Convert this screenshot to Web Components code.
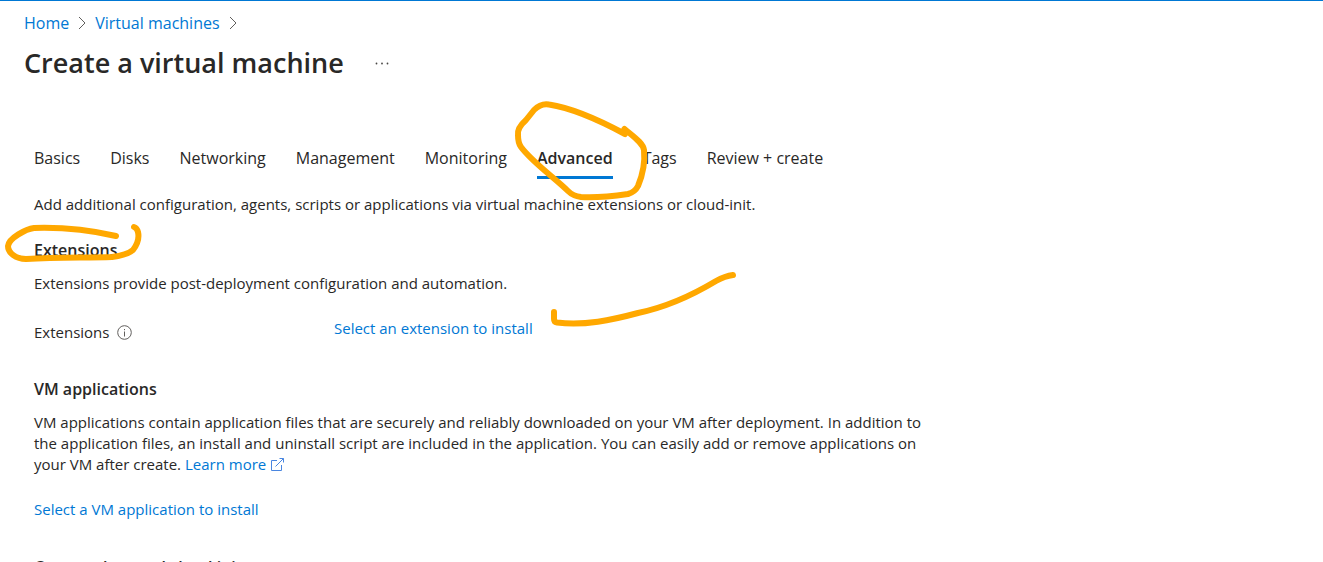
<!DOCTYPE html>
<html lang="en">
<head>
<meta charset="utf-8">
<title>Create a virtual machine</title>
<style>
html, body { height: 100%; }
body { margin: 0; overflow: hidden; background: #fff; color: #292827; font: 15px/21px "Open Sans", "Noto Sans", sans-serif; }
</style>
</head>
<body>
<vm-page></vm-page>
<script>
function define(name, html) {
  const template = document.createElement('template');
  template.innerHTML = html;
  customElements.define(name, class extends HTMLElement {
    constructor() {
      super();
      this.attachShadow({ mode: 'open' }).append(template.content.cloneNode(true));
    }
  });
}

define('crumb-trail', `
<style>
:host { display: block; font-size: 16px; line-height: 24px; }
nav { display: flex; align-items: center; gap: 9px; }
a { color: #0078d4; text-decoration: none; }
svg { width: 8px; height: 14px; fill: none; stroke: #605e5c; }
</style>
<nav aria-label="Breadcrumb">
  <a href="#home">Home</a>
  <svg viewBox="0 0 8 14" aria-hidden="true"><path d="M1 1l6 6-6 6"/></svg>
  <a href="#vms">Virtual machines</a>
  <svg viewBox="0 0 8 14" aria-hidden="true"><path d="M1 1l6 6-6 6"/></svg>
</nav>`);

define('page-title', `
<style>
:host { display: flex; align-items: center; gap: 31px; }
h1 { margin: 0; font-size: 27px; line-height: 40px; font-weight: 600; }
button { border: 0; padding: 0; background: none; display: flex; }
svg { width: 14px; height: 4px; fill: #484644; }
</style>
<h1><slot></slot></h1>
<button type="button" aria-label="More actions"><svg viewBox="0 0 14 4"><circle cx="1.500" cy="2.500" r=".9"/><circle cx="7" cy="2.500" r=".9"/><circle cx="12.500" cy="2.500" r=".9"/></svg></button>`);

define('tab-item', `
<style>
:host { display: block; }
button { font: inherit; font-size: 16px; line-height: 24px; color: inherit; border: 0; border-bottom: 3px solid transparent; padding: 0 0 6px; background: none; white-space: nowrap; }
:host([selected]) button { font-weight: 600; border-color: #0078d4; }
</style>
<button type="button" role="tab"><slot></slot></button>`);

define('tab-bar', `
<style>:host { display: flex; gap: 30px; }</style>
<slot></slot>`);

define('text-link', `
<style>
:host { display: inline-block; }
a { color: #0078d4; text-decoration: none; }
svg { display: none; width: 13px; height: 13px; margin-left: 5px; fill: none; stroke: #4a86e0; vertical-align: -1px; }
:host([external]) svg { display: inline; }
</style>
<a href="#open"><slot></slot><svg viewBox="0 0 13 13" aria-hidden="true"><path d="M6 2.500H.5v10h10V7M4.500 8.500l8-8M8.500.5h4v4"/></svg></a>`);

define('form-section', `
<style>
:host { display: block; }
h2 { margin: 0 0 11px; font-size: 16px; line-height: 24px; font-weight: 600; }
</style>
<h2><slot name="heading"></slot></h2>
<slot></slot>`);

define('form-row', `
<style>
:host { display: grid; grid-template-columns: 300px 1fr; align-items: start; }
.label { display: flex; align-items: center; gap: 8px; padding-top: 4px; }
button { display: flex; padding: 0; border: 0; background: none; }
svg { width: 15px; height: 15px; fill: none; stroke: #605e5c; }
</style>
<div class="label"><slot name="label"></slot>
<button type="button" aria-label="More information"><svg viewBox="0 0 15 15"><circle cx="7.500" cy="7.500" r="6.800"/><path d="M7.500 6.500v5M7.500 4v1.200"/></svg></button></div>
<slot></slot>`);

define('ink-notes', `
<style>
:host { position: absolute; top: -1px; left: 0; pointer-events: none; }
svg { display: block; width: 760px; height: 340px; fill: none; stroke: #ffa800; stroke-width: 6; stroke-linecap: round; stroke-linejoin: round; }
</style>
<svg viewBox="0 0 760 340" aria-hidden="true">
<path d="M625 134C599 120 572 108 549 104.500Q541 103 534 110L526 120Q517 128 518 135Q518 143 521 147C533 163 555 178 568 191Q573 196 581 197C598 198 614 196 628 194Q635 192 638 186C643 174 645 160 644 150C643 143 634 137 624.500 129"/>
<path d="M116 236C94 231 65 227 34 228C26 229 9 238 8 246C8 253 16 259 26 259C60 257 86 258 112 257Q127 255 133 250Q140 241 138 232Q137 228 134 227"/>
<path d="M554 312V319Q554 322 557 322.500C584 326 612 320 638 313C667 307 696 293 716 281Q725 276 733 275"/>
</svg>`);

define('vm-page', `
<style>
:host { display: block; position: relative; border-top: 1px solid #0078d4; padding: 10px 24px 0; }
page-title { margin-top: 8px; }
main { padding: 63px 0 0 10px; max-width: 896px; }
p { margin: 0; }
.intro { margin: 15px 0 23px; }
form-row { margin: 24px 0 34px; }
.select { margin: 24px 0 35px; }
</style>
<crumb-trail></crumb-trail>
<page-title>Create a virtual machine</page-title>
<main>
  <tab-bar role="tablist">
    <tab-item>Basics</tab-item><tab-item>Disks</tab-item><tab-item>Networking</tab-item><tab-item>Management</tab-item><tab-item>Monitoring</tab-item><tab-item selected>Advanced</tab-item><tab-item>Tags</tab-item><tab-item>Review + create</tab-item>
  </tab-bar>
  <p class="intro">Add additional configuration, agents, scripts or applications via virtual machine extensions or cloud-init.</p>
  <form-section>
    <span slot="heading">Extensions</span>
    <p>Extensions provide post-deployment configuration and automation.</p>
    <form-row><span slot="label">Extensions</span><text-link>Select an extension to install</text-link></form-row>
  </form-section>
  <form-section>
    <span slot="heading">VM applications</span>
    <p>VM applications contain application files that are securely and reliably downloaded on your VM after deployment. In addition to the application files, an install and uninstall script are included in the application. You can easily add or remove applications on your VM after create. <text-link external>Learn more</text-link></p>
    <p class="select"><text-link>Select a VM application to install</text-link></p>
  </form-section>
  <form-section>
    <span slot="heading">Custom data and cloud init</span>
  </form-section>
</main>
<ink-notes></ink-notes>`);
</script>
</body>
</html>
